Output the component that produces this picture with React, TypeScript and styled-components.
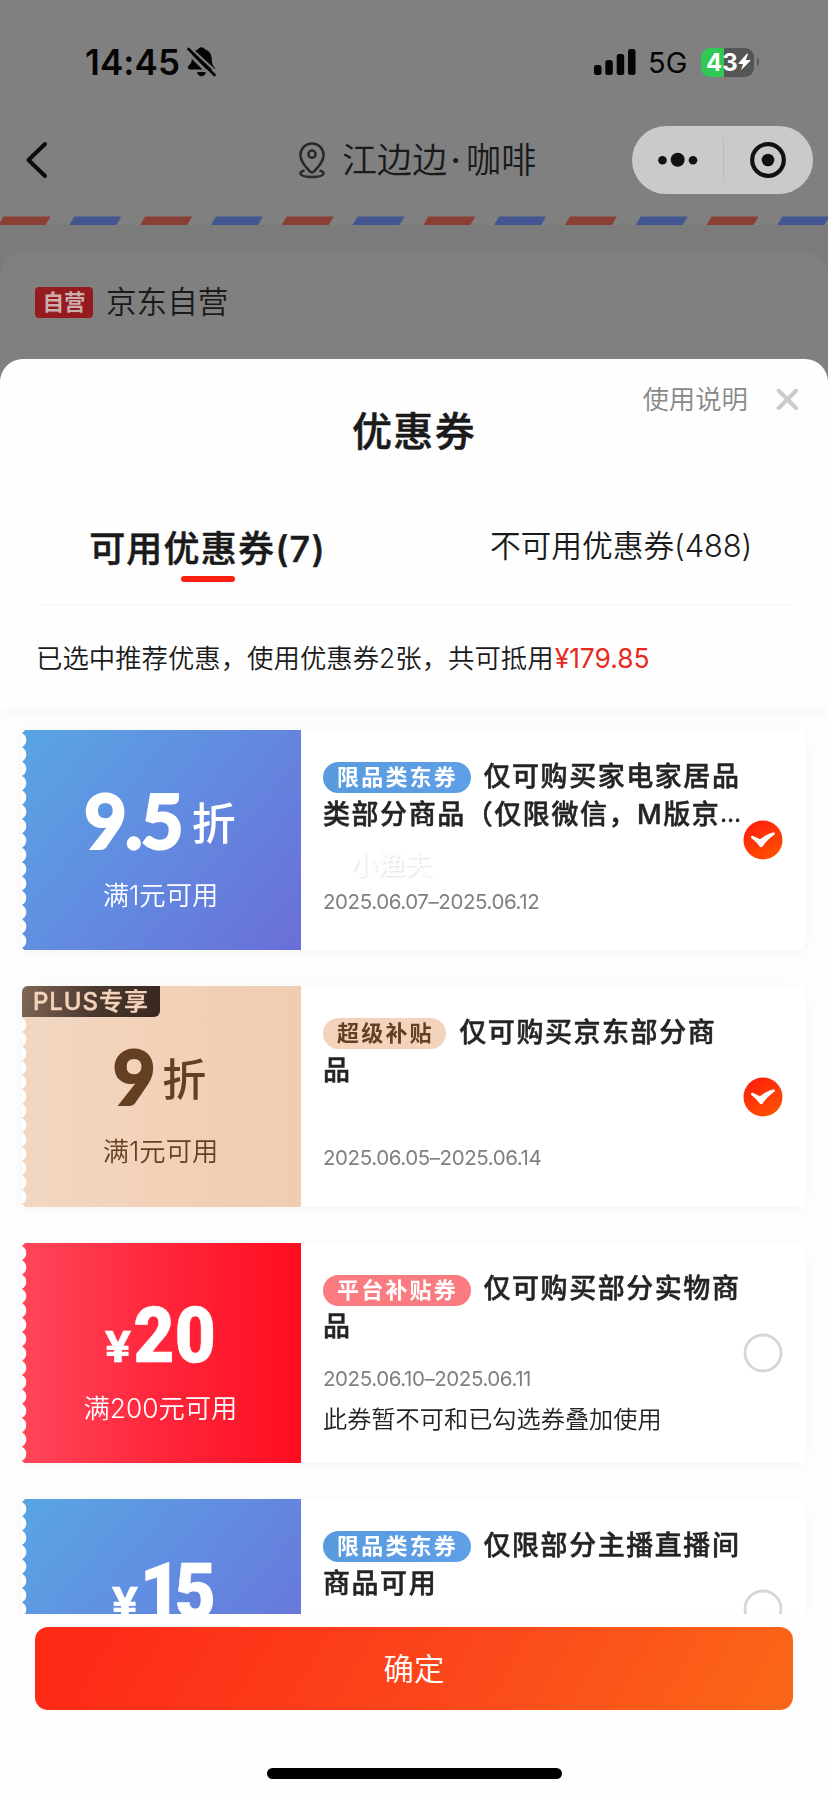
import React from "react";
import styled, { createGlobalStyle, css } from "styled-components";

const GlobalStyle = createGlobalStyle`
  * { box-sizing: border-box; }
  body { margin: 0; background: #808080; }
`;

const Screen = styled.div`
  width: 828px;
  height: 1796px;
  overflow: hidden;
  display: flex;
  flex-direction: column;
  background: #808080;
  color: #1a1a1a;
  font-family: Inter, "Noto Sans CJK SC", sans-serif;
  white-space: nowrap;
`;

const Backdrop = styled.div`
  height: 359px;
  flex: none;
  display: flex;
  flex-direction: column;
`;

const StatusBar = styled.div`
  height: 124px;
  padding: 0 69px 0 85px;
  display: flex;
  align-items: center;
  justify-content: space-between;
  color: #050505;
`;

const StatusGroup = styled.div`
  display: flex;
  align-items: center;
`;

const Clock = styled.span`
  font-size: 35px;
  line-height: 40px;
  font-weight: 600;
  letter-spacing: 0.1px;
  width: 102px;
`;

const Network = styled.span`
  font-size: 29px;
  line-height: 36px;
  width: 53px;
  margin: 2px 0 0 12px;
`;

const NavBar = styled.div`
  height: 72px;
  padding: 0 15px 0 25px;
  display: grid;
  grid-template-columns: 273px 1fr 181px;
  align-items: center;
`;

const NavTitle = styled.div`
  display: flex;
  align-items: center;
  gap: 16px;
  font-size: 35px;
  line-height: 40px;
  font-weight: 350;
  letter-spacing: 0.1px;
`;

const MidDot = styled.span`
  margin: 0 5px 0 3px;
  font-weight: 500;
`;

const Capsule = styled.div`
  height: 68px;
  border-radius: 34px;
  background: #cacaca;
  display: flex;
  align-items: center;
  justify-content: center;
`;

const Stripes = styled.svg`
  display: block;
  margin-top: 20px;
  height: 9px;
  flex: none;
`;

const StoreArea = styled.div`
  flex: 1;
  padding-top: 26px;
  background: #7b7b7b;
`;

const StoreCard = styled.div`
  height: 108px;
  padding: 35px 35px 0;
  display: flex;
  align-items: flex-start;
  gap: 13px;
  border-radius: 27px 27px 0 0;
  background: #808080;
`;

const SelfTag = styled.span`
  width: 58px;
  height: 31px;
  margin-top: 1px;
  border-radius: 4px;
  background: #951b1f;
  color: #cdaeae;
  font-size: 21.5px;
  line-height: 30px;
  font-weight: 700;
  text-align: center;
`;

const StoreName = styled.span`
  font-size: 30.6px;
  line-height: 32px;
  font-weight: 350;
`;

const Sheet = styled.section`
  flex: 1;
  min-height: 0;
  display: flex;
  flex-direction: column;
  border-radius: 23px 23px 0 0;
  overflow: hidden;
  background: #fefefe;
`;

const SheetHead = styled.header`
  position: relative;
  height: 144px;
  flex: none;
  text-align: center;
`;

const SheetTitle = styled.h1`
  margin: 0;
  padding-top: 49px;
  font-size: 40px;
  line-height: 48px;
  font-weight: 500;
  letter-spacing: 1.3px;
  -webkit-text-stroke: 0.5px currentColor;
`;

const HeadActions = styled.div`
  position: absolute;
  top: 22px;
  right: 29px;
  display: flex;
  align-items: center;
  gap: 28px;
  color: #888;
  font-size: 26.4px;
  line-height: 36px;
  font-weight: 350;
`;

const Tabs = styled.nav`
  height: 103px;
  margin: 0 35px;
  flex: none;
  display: grid;
  grid-template-columns: 1fr 1fr;
  border-bottom: 2px solid #f9f9f9;
`;

const Tab = styled.div<{ $active?: boolean }>`
  display: flex;
  flex-direction: column;
  align-items: center;
  font-size: ${(p) => (p.$active ? "36px" : "30.8px")};
  font-weight: ${(p) => (p.$active ? 500 : 350)};
  letter-spacing: ${(p) => (p.$active ? "1.2px" : "-0.1px")};
  -webkit-text-stroke: ${(p) => (p.$active ? "0.5px" : "0")} currentColor;
  line-height: 44px;
  padding: ${(p) => (p.$active ? "24px 34px 0 0" : "21px 0 0 35px")};

  &::after {
    content: "";
    width: 54px;
    height: 6px;
    margin-top: 5px;
    border-radius: 3px;
    background: ${(p) => (p.$active ? "#fa2110" : "transparent")};
  }
`;

const Summary = styled.p`
  margin: 0;
  padding: 32px 36px 0;
  height: 103px;
  flex: none;
  font-size: 26.4px;
  line-height: 40px;
  font-weight: 350;
  box-shadow: 0 10px 12px -4px rgba(0, 0, 0, 0.035);
`;

const Price = styled.span`
  margin-left: 1px;
  color: #e8291d;
  font-weight: 380;
`;

const CouponList = styled.div`
  height: 905px;
  flex: none;
  overflow: hidden;
  padding: 21px 23px 0 22px;
  display: flex;
  flex-direction: column;
  gap: 36px;
`;

const Card = styled.article`
  position: relative;
  height: 220.4px;
  flex: none;
  display: flex;
  border-radius: 6px;
  background: linear-gradient(#fff, #fff) 14px 0 no-repeat;
  filter: drop-shadow(0 2px 7px rgba(0, 0, 0, 0.04));
`;

type Tone = "blue" | "gold" | "red";

const ticketTone = {
  blue: css`
    --fill: linear-gradient(130deg, #5aa3e2 5%, #628ae0 50%, #6a70d8 96%);
    color: #fff;
  `,
  gold: css`
    --fill: linear-gradient(90deg, #f1d7c2, #f2d1b8 50%, #f0ccb0);
    color: #643f22;
  `,
  red: css`
    --fill: linear-gradient(90deg, #ff465b, #ff263b 50%, #ff0d20);
    color: #fff;
  `,
};

const Ticket = styled.div<{ $tone: Tone }>`
  ${(p) => ticketTone[p.$tone]}
  width: 279px;
  flex: none;
  padding-top: 60px;
  display: flex;
  flex-direction: column;
  align-items: center;
  background: radial-gradient(circle at -3.5px 50%, #fff 7.4px, transparent 8.2px) 0 2.9px / 9px
      14.35px repeat-y,
    var(--fill);
`;

const Amount = styled.div<{ $discount: boolean }>`
  height: 60px;
  display: flex;
  align-items: ${(p) => (p.$discount ? "flex-start" : "baseline")};
  padding-top: ${(p) => (p.$discount ? 0 : 3)}px;
  margin-right: ${(p) => (p.$discount ? "5px" : "-3px")};
  line-height: 60px;
`;

const Digits = styled.span<{ $discount?: boolean; $tight?: boolean }>`
  font-family: ${(p) => (p.$discount ? "Lato" : "Roboto")}, sans-serif;
  font-size: 77px;
  font-weight: 900;
  letter-spacing: ${(p) => (p.$tight ? "-7px" : p.$discount ? "-2px" : "0")};
  margin-top: ${(p) => (p.$discount ? "-1px" : "0")};
  -webkit-text-stroke: ${(p) => (p.$discount ? "2px" : "0.6px")} currentColor;
  transform: scaleX(${(p) => (p.$discount ? 0.96 : 0.92)});
`;

const Yen = styled.span`
  font-size: 42px;
  font-weight: 700;
  -webkit-text-stroke: 0.6px currentColor;
  transform: scaleX(1.12);
`;

const Zhe = styled.span`
  margin: 4px 0 0 8px;
  font-size: 44px;
  font-weight: 500;
`;

const Condition = styled.div`
  margin: 30px 2px 0 0;
  font-size: 26.3px;
  line-height: 32px;
  font-weight: 350;
`;

const PlusTag = styled.div`
  position: absolute;
  left: 0;
  top: 0;
  width: 138px;
  height: 31px;
  border-radius: 6px 0 6px 0;
  background: linear-gradient(100deg, #806757, #4c3a30 50%, #37271f);
  color: #f5d3ba;
  font-size: 24px;
  line-height: 31px;
  font-weight: 500;
  letter-spacing: 1px;
  text-align: center;
  -webkit-text-stroke: 0.4px currentColor;
`;

const Body = styled.div<{ $note: boolean }>`
  width: 420px;
  flex: none;
  padding: 27px 0 ${(p) => (p.$note ? 28 : 36.5)}px 22px;
  display: flex;
  flex-direction: column;
`;

const TitleLine = styled.div`
  height: 38px;
  display: flex;
  align-items: center;
  font-size: 27px;
  line-height: 39px;
  font-weight: 500;
  letter-spacing: 1.55px;
  -webkit-text-stroke: 0.5px currentColor;
  color: #242424;
`;

const Ellipsis = styled.span`
  font-size: 22px;
  letter-spacing: 0.3px;
`;

const badgeTone = {
  blue: css`
    background: linear-gradient(90deg, #579bdd, #5f9fe8);
    color: #fff;
  `,
  gold: css`
    background: #f4d3bc;
    color: #643f22;
  `,
  red: css`
    background: #fa7c80;
    color: #fff;
  `,
};

const Badge = styled.span<{ $tone: Tone }>`
  ${(p) => badgeTone[p.$tone]}
  height: 31px;
  margin: 3px 13px 0 0;
  padding: 0 12.5px 0 14px;
  border-radius: 16px;
  font-size: 22px;
  line-height: 31px;
  font-weight: 700;
  letter-spacing: 2.2px;
  -webkit-text-stroke: 0;
`;

const Dates = styled.div`
  margin-top: auto;
  font-size: 20.5px;
  line-height: 24px;
  font-weight: 380;
  letter-spacing: -0.42px;
  color: #808080;
`;

const Note = styled.div`
  margin-top: 14px;
  font-size: 24.2px;
  line-height: 30px;
  font-weight: 350;
  color: #222;
`;

const Selector = styled.svg`
  flex: none;
  align-self: center;
  margin-left: 22px;
`;

const Watermark = styled.span`
  position: absolute;
  left: 329px;
  top: 120px;
  font-size: 27px;
  line-height: 32px;
  color: #fff;
  text-shadow: 1px 1px 2px rgba(0, 0, 0, 0.13);
`;

const Footer = styled.footer`
  flex: 1;
  padding: 13px 35px 17px;
  display: flex;
  flex-direction: column;
  align-items: center;
  justify-content: space-between;
  background: #fefefe;
`;

const Confirm = styled.button`
  width: 758px;
  height: 83px;
  padding: 1px 0 0;
  border: 0;
  border-radius: 13px;
  background: linear-gradient(120deg, #fe2b17 8%, #fb4a1b 60%, #fb6518 96%);
  color: #fff;
  font: 350 30.4px / 83px Inter, "Noto Sans CJK SC", sans-serif;
`;

const HomeIndicator = styled.div`
  width: 295px;
  height: 11px;
  border-radius: 6px;
  background: #000;
`;

const BellOff = () => (
  <svg width="30" height="32" viewBox="0 0 30 32" fill="#050505">
    <path d="M14.500 1.200c1.900 0 3.200 1 3.600 2.300 4.200 1.200 6.400 4.600 6.600 9 .2 5.300 1 6.700 2.600 8.600.8.8 1 1.500.8 2.300H3.300c-2.600 0-3-2-1.700-3.600C3.800 17.500 4.800 16.500 4.800 12.500c.2-4.400 2.200-7.800 6.100-9 .5-1.300 1.700-2.300 3.600-2.300z" />
    <path d="M10 26h9c-.4 2.500-2.200 4.200-4.500 4.200S10.400 28.500 10 26z" />
    <path d="M-1 4.800 27 33" stroke="#808080" strokeWidth="3" />
    <path d="M2.500 1 30 26.500" stroke="#808080" strokeWidth="2.200" />
    <path d="M1.500 3 27.500 29" stroke="#050505" strokeWidth="2.600" strokeLinecap="round" />
  </svg>
);

const Signal = () => (
  <svg width="42" height="28" viewBox="0 0 42 28" fill="#050505">
    <rect x="0" y="17" width="7.500" height="10" rx="2.500" />
    <rect x="11.300" y="12" width="7.500" height="15" rx="2.500" />
    <rect x="22.700" y="6" width="7.500" height="21" rx="2.500" />
    <rect x="34" y="1" width="7.500" height="26" rx="2.500" />
  </svg>
);

const BatteryBox = styled.div`
  display: flex;
  align-items: center;
  gap: 3px;

  &::after {
    content: "";
    width: 2px;
    height: 8px;
    border-radius: 0 3px 3px 0;
    background: #5c5c5c;
  }
`;

const BatteryLevel = styled.div`
  width: 53px;
  height: 29px;
  padding-left: 5px;
  border-radius: 9px;
  background: linear-gradient(90deg, #30c954 23px, #555 23px);
  display: flex;
  align-items: center;
  color: #fff;
  font-size: 24px;
  line-height: 29px;
  font-weight: 700;
`;

const Battery = () => (
  <BatteryBox>
    <BatteryLevel>
      43
      <svg width="13" height="18" viewBox="0 0 13 18" fill="#fff">
        <path d="M9 .5.7 10c-.4.5-.1 1 .5 1H5l-2 6.300L12.200 8c.4-.5.100-1-.5-1H7.800L10 1z" />
      </svg>
    </BatteryLevel>
  </BatteryBox>
);

const BackIcon = () => (
  <svg width="23" height="40" viewBox="0 0 23 40" fill="none" stroke="#0c0c0c" strokeWidth="4">
    <path d="M20 4 3.500 20 20 36" strokeLinecap="round" strokeLinejoin="round" />
  </svg>
);

const PinIcon = () => (
  <svg width="28" height="38" viewBox="0 0 28 38" fill="none" stroke="#2a2a2a" strokeWidth="2.500">
    <path d="M11.800 30.300C7.500 25.800 2.400 20.500 2.400 14a11.600 11.600 0 0 1 23.200 0c0 6.500-5.100 11.800-9.400 16.300-1.500 1.500-2.900 1.500-4.400 0z" />
    <circle cx="14" cy="13.200" r="3.600" />
    <path d="M5.500 29.800c-2.300.8-3.300 1.800-3 3 .5 2 5.500 3.200 11.500 3.200s11-1.200 11.500-3.200c.3-1.200-.7-2.200-3-3" strokeLinecap="round" />
  </svg>
);

const CapsuleIcons = () => (
  <svg width="181" height="68" viewBox="0 0 181 68" fill="#111">
    <circle cx="30.500" cy="34.300" r="4.300" />
    <circle cx="45.700" cy="33.800" r="7" />
    <circle cx="61" cy="34.300" r="4.300" />
    <rect x="91" y="11" width="1" height="44" fill="#bcbcbc" />
    <circle cx="136" cy="34" r="15.800" fill="none" stroke="#111" strokeWidth="4.200" />
    <circle cx="136" cy="34" r="6.300" />
  </svg>
);

const CloseIcon = () => (
  <svg width="23" height="23" viewBox="0 0 23 23" stroke="#ccc" strokeWidth="4.300" strokeLinecap="round">
    <path d="M2.800 2.800 20 20M20 2.800 2.800 20" />
  </svg>
);

const SelectMark = ({ checked, id }: { checked: boolean; id: string }) => (
  <Selector width="40" height="40" viewBox="0 0 40 40">
    {checked ? (
      <>
        <defs>
          <linearGradient id={id} x1="0.200" y1="0" x2="0.800" y2="1">
            <stop offset="0" stopColor="#fd1d0d" />
            <stop offset="1" stopColor="#ff5400" />
          </linearGradient>
        </defs>
        <circle cx="20" cy="20" r="19.500" fill={`url(#${id})`} />
        <path
          d="M8.200 18c-.9-1.400.3-2.700 2-2.100l6.800 3.300c3.600-2.700 7.800-5.200 12.800-6.600 2.200-.5 2.900.8 1.500 2.100-4.400 3-8.600 6.800-11.700 11.700-.7 1.100-2.100 1.100-2.900 0-2.200-3.100-4.900-5.700-8.500-8.400z"
          fill="#fff"
        />
      </>
    ) : (
      <circle cx="20" cy="20" r="18" fill="none" stroke="#d6d6d6" strokeWidth="2.800" />
    )}
  </Selector>
);

interface Coupon {
  id: string;
  tone: Tone;
  discount?: string;
  value?: string;
  condition?: string;
  badge: string;
  lines: [string, string];
  clipped?: boolean;
  dates?: string;
  note?: string;
  checked: boolean;
  plus?: boolean;
  watermark?: string;
}

const coupons: Coupon[] = [
  {
    id: "appliance",
    tone: "blue",
    discount: "9.5",
    condition: "满1元可用",
    badge: "限品类东券",
    lines: ["仅可购买家电家居品", "类部分商品（仅限微信，M版京"],
    clipped: true,
    dates: "2025.06.07–2025.06.12",
    checked: true,
    watermark: "小渔夫",
  },
  {
    id: "plus",
    tone: "gold",
    discount: "9",
    condition: "满1元可用",
    badge: "超级补贴",
    lines: ["仅可购买京东部分商", "品"],
    dates: "2025.06.05–2025.06.14",
    checked: true,
    plus: true,
  },
  {
    id: "platform",
    tone: "red",
    value: "20",
    condition: "满200元可用",
    badge: "平台补贴券",
    lines: ["仅可购买部分实物商", "品"],
    dates: "2025.06.10–2025.06.11",
    note: "此券暂不可和已勾选券叠加使用",
    checked: false,
  },
  {
    id: "live",
    tone: "blue",
    value: "15",
    badge: "限品类东券",
    lines: ["仅限部分主播直播间", "商品可用"],
    checked: false,
  },
];

const CouponCard = ({ coupon }: { coupon: Coupon }) => (
  <Card>
    <Ticket $tone={coupon.tone}>
      <Amount $discount={!!coupon.discount}>
        {coupon.discount ? (
          <>
            <Digits $discount>{coupon.discount}</Digits>
            <Zhe>折</Zhe>
          </>
        ) : (
          <>
            <Yen>¥</Yen>
            <Digits $tight={coupon.value?.startsWith("1")}>{coupon.value}</Digits>
          </>
        )}
      </Amount>
      {coupon.condition && <Condition>{coupon.condition}</Condition>}
    </Ticket>
    {coupon.plus && <PlusTag>PLUS专享</PlusTag>}
    <Body $note={!!coupon.note}>
      <TitleLine>
        <Badge $tone={coupon.tone}>{coupon.badge}</Badge>
        {coupon.lines[0]}
      </TitleLine>
      <TitleLine>
        {coupon.lines[1]}
        {coupon.clipped && <Ellipsis>...</Ellipsis>}
      </TitleLine>
      {coupon.dates && <Dates>{coupon.dates}</Dates>}
      {coupon.note && <Note>{coupon.note}</Note>}
    </Body>
    <SelectMark checked={coupon.checked} id={`mark-${coupon.id}`} />
    {coupon.watermark && <Watermark>{coupon.watermark}</Watermark>}
  </Card>
);

const stripeXs = Array.from({ length: 12 }, (_, i) => -1.5 + i * 70.8);

export default function App() {
  return (
    <Screen>
      <GlobalStyle />
      <Backdrop>
        <StatusBar>
          <StatusGroup>
            <Clock>14:45</Clock>
            <BellOff />
          </StatusGroup>
          <StatusGroup>
            <Signal />
            <Network>5G</Network>
            <Battery />
          </StatusGroup>
        </StatusBar>
        <NavBar>
          <BackIcon />
          <NavTitle>
            <PinIcon />
            <span>
              江边边<MidDot>·</MidDot>咖啡
            </span>
          </NavTitle>
          <Capsule>
            <CapsuleIcons />
          </Capsule>
        </NavBar>
        <Stripes width="828" height="9" viewBox="0 0 828 9">
          {stripeXs.map((x, i) => (
            <path
              key={x}
              d={`M${x + 5} .5h47l-5 8.500h-47z`}
              fill={i % 2 ? "#435691" : "#8a3f35"}
            />
          ))}
        </Stripes>
        <StoreArea>
          <StoreCard>
            <SelfTag>自营</SelfTag>
            <StoreName>京东自营</StoreName>
          </StoreCard>
        </StoreArea>
      </Backdrop>
      <Sheet>
        <SheetHead>
          <SheetTitle>优惠券</SheetTitle>
          <HeadActions>
            使用说明
            <CloseIcon />
          </HeadActions>
        </SheetHead>
        <Tabs>
          <Tab $active>可用优惠券(7)</Tab>
          <Tab>不可用优惠券(488)</Tab>
        </Tabs>
        <Summary>
          已选中推荐优惠，使用优惠券2张，共可抵用<Price>¥179.85</Price>
        </Summary>
        <CouponList>
          {coupons.map((c) => (
            <CouponCard key={c.id} coupon={c} />
          ))}
        </CouponList>
        <Footer>
          <Confirm>确定</Confirm>
          <HomeIndicator />
        </Footer>
      </Sheet>
    </Screen>
  );
}
